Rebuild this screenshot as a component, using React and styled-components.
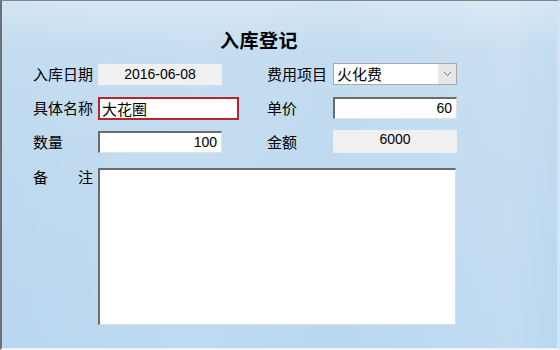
import React from 'react'
import styled, { createGlobalStyle } from 'styled-components'

const Global = createGlobalStyle`
  html, body { margin: 0; padding: 0; }
  body {
    font-family: "Noto Sans CJK SC", "Liberation Sans", sans-serif;
    color: #000;
  }
`

const Window = styled.div`
  box-sizing: border-box;
  width: 560px;
  height: 350px;
  border-top: 1px solid #7d8690;
  border-left: 2px solid #6c7177;
  border-right: 3px solid #d3e5f2;
  border-bottom: 2px solid #eef4f9;
  background:
    linear-gradient(90deg, rgba(255,255,255,0) 0%, rgba(255,255,255,0.08) 35%, rgba(255,255,255,0) 60%, rgba(255,255,255,0.12) 92%, rgba(255,255,255,0) 100%),
    linear-gradient(180deg, #d4e6f4 0%, #c3dcf0 14%, #bed9ef 55%, #b9d7ef 100%);
  padding: 29px 0 0 31px;
`

const Title = styled.h1`
  margin: 0 0 13px 187px;
  font-size: 19px;
  font-weight: 600;
  line-height: 20px;
  letter-spacing: 0.5px;
`

const Form = styled.div`
  display: grid;
  grid-template-columns: 65px 169px 66px 124px;
  grid-template-rows: 22px 22px 22px 160px;
  row-gap: 12px;
  align-items: center;
`

const Label = styled.div`
  font-size: 15px;
  line-height: 22px;
  white-space: nowrap;
  ${p => p.$spread && `
    align-self: start;
    width: 60px;
    display: flex;
    justify-content: space-between;
    margin-top: 1px;
  `}
`

const Static = styled.div`
  box-sizing: border-box;
  width: 124px;
  height: ${p => p.$tall ? 23 : 21}px;
  background: #f0f0f0;
  font-family: "Liberation Sans", sans-serif;
  font-size: 14px;
  line-height: ${p => p.$tall ? 19 : 21}px;
  text-align: center;
  ${p => p.$tall && 'align-self: end; padding-bottom: 4px;'}
`

const Input = styled.div`
  box-sizing: border-box;
  width: ${p => p.$w || 124}px;
  height: 22px;
  background: #fff;
  border-top: 2px solid #6b6b6b;
  border-left: 2px solid #6b6b6b;
  border-right: 1px solid #e2e2e2;
  border-bottom: 1px solid #e2e2e2;
  padding: 0 4px;
  font-family: "Liberation Sans", sans-serif;
  font-size: 14px;
  line-height: 19px;
  text-align: right;
`

const NameInput = styled.div`
  box-sizing: border-box;
  width: 141px;
  height: 23px;
  background: #fff;
  border: 2px solid #b3262e;
  padding: 0 2px;
  font-size: 15px;
  line-height: 19px;
`

const Select = styled.div`
  box-sizing: border-box;
  width: 124px;
  height: 22px;
  display: flex;
  background: #fff;
  border: 1px solid #a9a9a9;
`

const SelectText = styled.div`
  flex: 1;
  padding-left: 3px;
  font-size: 15px;
  line-height: 20px;
`

const Arrow = styled.div`
  width: 18px;
  background: #e7e7e7;
  display: flex;
  align-items: center;
  justify-content: center;
`

const Notes = styled.div`
  grid-column: 2 / 5;
  align-self: stretch;
  box-sizing: border-box;
  width: 358px;
  margin-top: 3px;
  background: #fff;
  border-top: 2px solid #6b6b6b;
  border-left: 2px solid #6b6b6b;
  border-right: 1px solid #dcdcdc;
  border-bottom: 1px solid #dcdcdc;
`

export default function App() {
  return (
    <>
      <Global />
      <Window>
        <Title>入库登记</Title>
        <Form>
          <Label>入库日期</Label>
          <Static>2016-06-08</Static>
          <Label>费用项目</Label>
          <Select>
            <SelectText>火化费</SelectText>
            <Arrow>
              <svg width="9" height="6" viewBox="0 0 9 6">
                <path d="M1 1 L4.5 4.5 L8 1" fill="none" stroke="#777" strokeWidth="1" />
              </svg>
            </Arrow>
          </Select>

          <Label>具体名称</Label>
          <NameInput>大花圈</NameInput>
          <Label>单价</Label>
          <Input>60</Input>

          <Label>数量</Label>
          <Input>100</Input>
          <Label>金额</Label>
          <Static $tall>6000</Static>

          <Label $spread><span>备</span><span>注</span></Label>
          <Notes />
        </Form>
      </Window>
    </>
  )
}
